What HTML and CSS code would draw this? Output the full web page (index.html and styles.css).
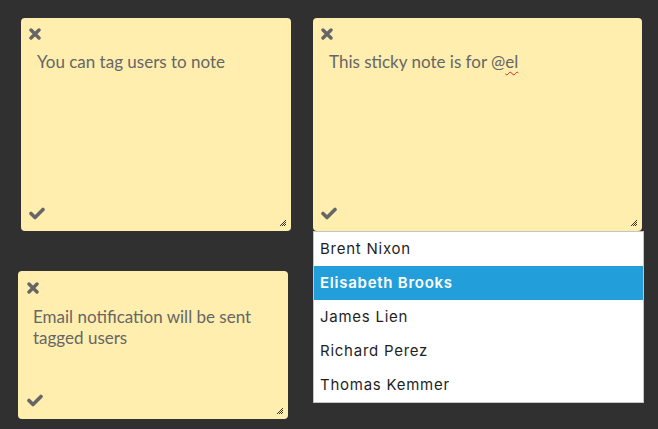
FILE: index.html
```html
<!DOCTYPE html>
<html lang="en">
<head>
<meta charset="utf-8">
<title>Sticky notes</title>
<link rel="stylesheet" href="styles.css">
</head>
<body>
<div class="board">
  <div class="col col-left">
    <div class="note note-a">
      <svg class="icon-close" viewBox="0 0 12 12" width="12" height="12"><path d="M2 2 L10 10 M10 2 L2 10" /></svg>
      <div class="note-text">You can tag users to note</div>
      <svg class="icon-check" viewBox="0 0 16 13" width="16" height="13"><path d="M2 6.5 L6 10.5 L14 2.5" /></svg>
      <svg class="grip" viewBox="0 0 8 8" width="8" height="8"><path d="M7 1 L1 7 M7 3 L3 7 M7 5 L5 7" /></svg>
    </div>
    <div class="note note-c">
      <svg class="icon-close" viewBox="0 0 12 12" width="12" height="12"><path d="M2 2 L10 10 M10 2 L2 10" /></svg>
      <div class="note-text">Email notification will be sent tagged users</div>
      <svg class="icon-check" viewBox="0 0 16 13" width="16" height="13"><path d="M2 6.5 L6 10.5 L14 2.5" /></svg>
      <svg class="grip" viewBox="0 0 8 8" width="8" height="8"><path d="M7 1 L1 7 M7 3 L3 7 M7 5 L5 7" /></svg>
    </div>
  </div>
  <div class="col col-right">
    <div class="note note-b">
      <svg class="icon-close" viewBox="0 0 12 12" width="12" height="12"><path d="M2 2 L10 10 M10 2 L2 10" /></svg>
      <div class="note-text">This sticky note is for @<span class="misspelled">el</span></div>
      <svg class="icon-check" viewBox="0 0 16 13" width="16" height="13"><path d="M2 6.5 L6 10.5 L14 2.5" /></svg>
      <svg class="grip" viewBox="0 0 8 8" width="8" height="8"><path d="M7 1 L1 7 M7 3 L3 7 M7 5 L5 7" /></svg>
      <ul class="mentions">
        <li class="mention">Brent Nixon</li>
        <li class="mention active">Elisabeth Brooks</li>
        <li class="mention">James Lien</li>
        <li class="mention">Richard Perez</li>
        <li class="mention">Thomas Kemmer</li>
      </ul>
    </div>
  </div>
</div>
</body>
</html>
```

FILE: styles.css
```css
html, body {
  margin: 0;
  padding: 0;
  background: #303030;
  height: 100%;
}

.board {
  display: flex;
  align-items: flex-start;
  gap: 22px;
  padding: 18px 0 0 18px;
}

.col {
  display: flex;
  flex-direction: column;
}

.note {
  position: relative;
  box-sizing: border-box;
  background: #ffeeae;
  border-radius: 4px;
  display: flex;
  flex-direction: column;
  font-family: "Lato", "Open Sans", sans-serif;
  color: #666666;
  font-size: 17px;
  line-height: 21px;
}

.note-a {
  width: 270px;
  height: 213px;
  margin-left: 3px;
  padding: 10px 16px 11px 8px;
}

.note-c {
  width: 270px;
  height: 148px;
  margin-top: 40px;
  padding: 11px 16px 12px 9px;
}

.note-b {
  width: 329px;
  height: 213px;
  padding: 10px 16px 11px 8px;
}

.icon-close {
  display: block;
  flex: none;
}

.icon-close path {
  stroke: #666666;
  stroke-width: 3.4;
  stroke-linecap: round;
  fill: none;
}

.note-text {
  margin: 11px 0 0 8px;
  flex: 1;
}

.note-c .note-text {
  margin-left: 6px;
  margin-top: 12px;
}

.icon-check {
  display: block;
  flex: none;
}

.icon-check path {
  stroke: #666666;
  stroke-width: 3.6;
  stroke-linecap: round;
  stroke-linejoin: round;
  fill: none;
}

.grip {
  position: absolute;
  right: 4px;
  bottom: 4px;
}

.grip path {
  stroke: #333333;
  stroke-width: 1;
  fill: none;
}

.misspelled {
  text-decoration: underline wavy #e02020;
  text-decoration-thickness: 1px;
  text-underline-offset: 3px;
}

.mentions {
  position: absolute;
  top: 100%;
  left: 0;
  width: 331px;
  box-sizing: border-box;
  margin: 0;
  padding: 0;
  list-style: none;
  background: #ffffff;
  border: 1px solid #c4c4c4;
  font-family: "Inter", "Noto Sans", sans-serif;
  font-size: 15px;
  font-weight: 400;
  letter-spacing: 0.75px;
  color: #1f1f1f;
}

.mention {
  height: 34px;
  line-height: 34px;
  padding-left: 6px;
}

.mention.active {
  background: #229fdb;
  color: #ffffff;
  font-weight: 600;
}
```
